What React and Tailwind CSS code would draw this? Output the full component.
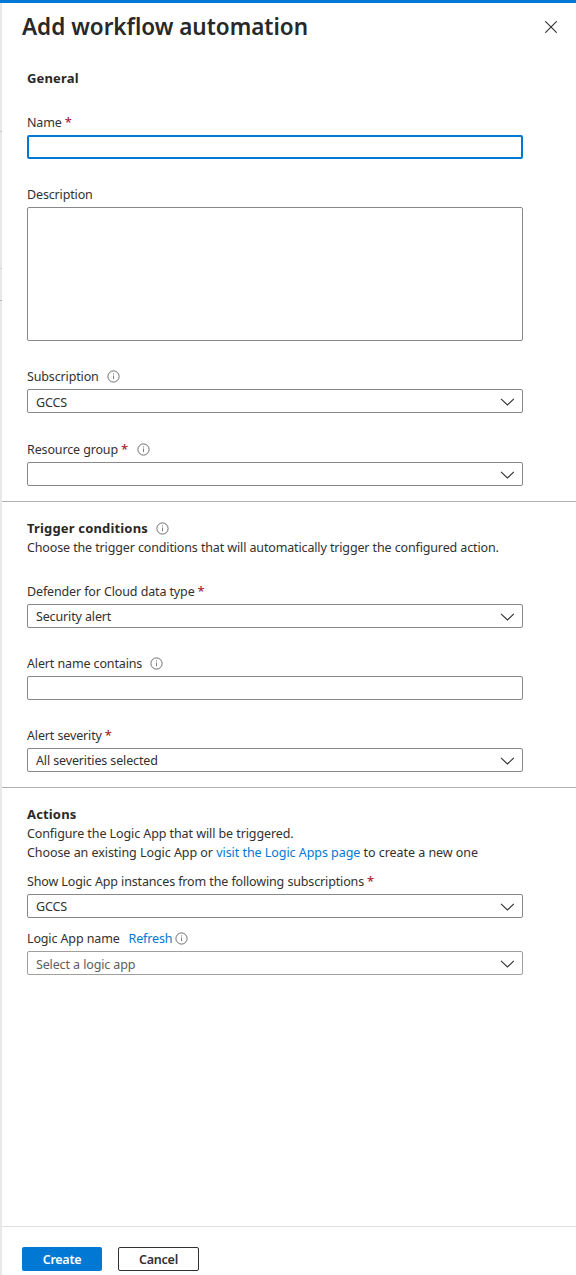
function InfoIcon({ className = "ml-2" }) {
  return (
    <svg className={`h-[13px] w-[13px] shrink-0 ${className}`} viewBox="0 0 13 13" fill="none">
      <circle cx="6.5" cy="6.5" r="5.6" stroke="#605e5c" strokeWidth="0.9" />
      <path d="M6.5 5.5V9.2" stroke="#807e7c" strokeWidth="1" />
      <path d="M6.5 3.4V4.5" stroke="#807e7c" strokeWidth="1" />
    </svg>
  );
}

function Chevron() {
  return (
    <svg className="mt-[2px] mr-2 h-[8px] w-[14px] shrink-0" viewBox="0 0 14 8" fill="none">
      <path d="M1 0.9L7.4 7L13.8 0.9" stroke="#323130" strokeWidth="1.1" />
    </svg>
  );
}

function Heading({ children }) {
  return <h2 className="text-[13px] font-bold tracking-[0.16px] text-[#292827]">{children}</h2>;
}

function Label({ children, required, info, className = "" }) {
  return (
    <div className={`mb-1 flex h-[18px] items-center ${className}`}>
      <span className="pt-[2px]">{children}</span>
      {required && <span className="mr-px ml-[3px] text-[13px] font-medium text-[#a4262c]">*</span>}
      {info && <InfoIcon />}
    </div>
  );
}

function Select({ value, placeholder, raised }) {
  return (
    <div
      className={`flex h-6 w-[496px] items-center justify-between rounded-[2px] border pl-2 ${
        placeholder ? "border-[#a19f9d] text-[#605e5c]" : "border-[#8a8886]"
      }`}
    >
      <span className={raised ? "pt-[2px]" : "pt-1"}>{value}</span>
      <Chevron />
    </div>
  );
}

export default function App() {
  return (
    <div className="flex h-[1275px] w-[576px] flex-col overflow-hidden bg-white font-['Noto_Sans','Open_Sans',sans-serif] text-[12.5px] leading-[18px] tracking-[-0.145px] [word-spacing:0.12px] text-[#323130]">
      <div className="h-[3px] shrink-0 bg-[#0078d4]" />
      <div className="flex min-h-0 flex-1">
        <div className="flex w-[2px] shrink-0 flex-col bg-[#e8e8e8]">
          <div className="mt-[128px] h-px bg-[#c8c8c8]" />
          <div className="mt-[136px] h-px bg-[#d2d2d2]" />
          <div className="mt-[31px] h-px bg-[#b8b8b8]" />
        </div>
        <div className="flex flex-1 flex-col">
          <header className="flex h-12 items-center justify-between pr-[19px] pl-5">
            <h1 className="text-[22.5px] leading-[30px] font-semibold tracking-[-0.03px] text-[#292827]">Add workflow automation</h1>
            <svg className="h-[12px] w-[12px]" viewBox="0 0 12 12" fill="none">
              <path d="M0.3 0.3L11.7 11.7M11.7 0.3L0.3 11.7" stroke="#323130" strokeWidth="1.1" />
            </svg>
          </header>

          <section className="h-[451px] border-b border-[#b3b0ad] pt-[18px] pl-[25px]">
            <Heading>General</Heading>
            <Label className="mt-[26px]" required>Name</Label>
            <div className="h-6 w-[496px] rounded-[2px] border-2 border-[#0078d4]" />
            <Label className="mt-[26px]">Description</Label>
            <div className="h-[134px] w-[496px] rounded-[2px] border border-[#8a8886]" />
            <Label className="mt-[26px]" info>Subscription</Label>
            <Select value="GCCS" />
            <Label className="mt-[27px]" required info>Resource group</Label>
            <Select value="" />
          </section>

          <section className="h-[286px] border-b border-[#b3b0ad] pt-[17px] pl-[25px]">
            <div className="flex h-[18px] items-center">
              <Heading>Trigger conditions</Heading>
              <InfoIcon />
            </div>
            <p className="mt-[2px]">Choose the trigger conditions that will automatically trigger the configured action.</p>
            <Label className="mt-[25px]" required>Defender for Cloud data type</Label>
            <Select value="Security alert" raised />
            <Label className="mt-[26px]" info>Alert name contains</Label>
            <div className="h-6 w-[496px] rounded-[2px] border border-[#8a8886]" />
            <Label className="mt-[26px]" required>Alert severity</Label>
            <Select value="All severities selected" raised />
          </section>

          <section className="flex-1 pt-[17px] pl-[25px]">
            <Heading>Actions</Heading>
            <p className="mt-[2px] tracking-[-0.11px]">Configure the Logic App that will be triggered.</p>
            <p className="mt-px tracking-[-0.075px]">
              Choose an existing Logic App or <a className="text-[#0078d4]">visit the Logic Apps page</a> to create a new one
            </p>
            <Label className="mt-[10px]" required>Show Logic App instances from the following subscriptions</Label>
            <Select value="GCCS" raised />
            <div className="mt-[11px] mb-1 flex h-[18px] items-center">
              <span className="pt-[2px]">Logic App name</span>
              <a className="ml-[9px] pt-[2px] text-[#0078d4]">Refresh</a>
              <InfoIcon className="ml-[3px]" />
            </div>
            <Select value="Select a logic app" placeholder />
          </section>

          <footer className="flex h-[49px] shrink-0 gap-4 border-t border-[#e1dfdd] pt-5 pl-5 font-semibold tracking-[-0.25px]">
            <button className="h-6 w-20 rounded-[2px] bg-[#0078d4] pt-[2px] text-white">Create</button>
            <button className="h-6 w-[81px] rounded-[2px] border border-[#323130] pt-[2px]">Cancel</button>
          </footer>
        </div>
      </div>
    </div>
  );
}
